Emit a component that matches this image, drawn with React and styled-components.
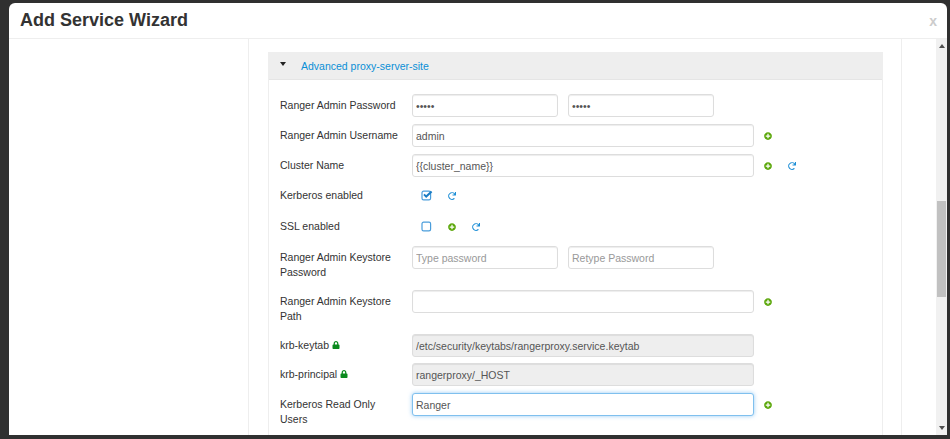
import React from 'react';
import styled, { createGlobalStyle } from 'styled-components';
import { FaPlusCircle, FaRedo, FaLock } from 'react-icons/fa';

const GlobalStyle = createGlobalStyle`
html, body {
  margin: 0;
  height: 100%;
  background: #333;
  overflow: hidden;
}
#root {
  height: 100%;
}
* {
  box-sizing: border-box;
}
`;

const Backdrop = styled.div`
width: 950px;
height: 439px;
padding: 3px 3px 4px 9px;
background: #303030;
`;

const Modal = styled.div`
height: 100%;
display: flex;
flex-direction: column;
overflow: hidden;
background: #fff;
border-radius: 6px 6px 0 0;
font-family: "Liberation Sans", Arial, sans-serif;
color: #333;
`;

const Header = styled.header`
flex: none;
height: 36px;
display: flex;
align-items: center;
justify-content: space-between;
padding: 0 10px 0 11px;
border-bottom: 1px solid #eee;
`;

const Title = styled.h3`
margin: 0;
font-size: 18px;
font-weight: bold;
`;

const Close = styled.span`
font-size: 14px;
font-weight: bold;
color: #ccc;
`;

const Body = styled.div`
flex: 1;
min-height: 0;
display: flex;
`;

const Sidebar = styled.aside`
flex: none;
width: 240px;
border-right: 1px solid #eee;
`;

const Content = styled.main`
flex: none;
width: 653px;
padding: 13px 18px 0 19px;
border-right: 1px solid #eee;
overflow: hidden;
`;

const Gutter = styled.div`
flex: 1;
`;

const Panel = styled.section`
border: 1px solid #eee;
border-bottom: 0;
height: 400px;
`;

const PanelHead = styled.div`
height: 27px;
display: flex;
align-items: center;
gap: 15px;
padding-left: 11px;
background: #eee;
border-bottom: 1px solid #e5e5e5;
`;

const Caret = styled.span`
width: 0;
height: 0;
margin-bottom: 4px;
border-left: 3.5px solid transparent;
border-right: 3.5px solid transparent;
border-top: 4px solid #222;
`;

const PanelLink = styled.a`
font-size: 10.5px;
color: #0a8fd6;
`;

const Form = styled.div`
display: flex;
flex-direction: column;
padding: 14px 0 0 11px;
`;

const Row = styled.div`
display: flex;
align-items: flex-start;
height: ${props => props.$height || 23}px;
margin-bottom: ${props => props.$gap ?? 7}px;
`;

const Label = styled.label`
flex: none;
width: 132px;
padding-top: ${props => props.$top ?? 4}px;
padding-right: 10px;
font-size: 10.5px;
line-height: 15px;
display: block;
`;

const Input = styled.input`
flex: none;
width: ${props => props.$width || 342}px;
height: 23px;
margin-right: ${props => props.$right || 0}px;
padding: 0 3px;
font-family: inherit;
font-size: 10.5px;
color: #555;
background: ${props => (props.readOnly ? '#eee' : '#fff')};
border: 1px solid ${props => (props.$focus ? '#7fc0ee' : '#ddd')};
border-radius: 3px;
box-shadow: ${props => (props.$focus
    ? '0 0 4px rgba(82,168,236,.6)'
    : 'inset 0 1px 1px rgba(0,0,0,.075)')};
outline: none;
&::placeholder {
  color: #999;
}
`;

const Actions = styled.div`
display: flex;
align-items: center;
gap: 16px;
height: 23px;
margin-left: ${props => props.$left ?? 10}px;
`;

const Add = styled(FaPlusCircle)`
width: 8px;
height: 8px;
color: #5ba70a;
`;

const Reset = styled(FaRedo)`
width: 8px;
height: 8px;
color: #1c8ed6;
`;

const Lock = styled(FaLock)`
width: 8px;
height: 8px;
margin-left: 3px;
color: #0a8a1e;
`;

const CheckSvg = styled.svg`
width: 12px;
height: 11px;
margin-left: 9px;
margin-right: -1px;
`;

const Scrollbar = styled.div`
flex: none;
width: 11px;
display: flex;
flex-direction: column;
align-items: center;
background: #f1f1f1;
`;

const ScrollArrow = styled.span`
flex: none;
width: 0;
height: 0;
margin: ${props => (props.$down ? 'auto 0 5px' : '5px 0 0')};
border-left: 3.5px solid transparent;
border-right: 3.5px solid transparent;
border-top: ${props => (props.$down ? '4px solid #505050' : '0')};
border-bottom: ${props => (props.$down ? '0' : '4px solid #505050')};
`;

const ScrollThumb = styled.div`
flex: none;
width: 9px;
height: 96px;
margin-top: 153px;
background: #c1c1c1;
`;

const Checkbox = ({ checked }) => (
  <CheckSvg viewBox="0 0 12 11">
    <rect x="1" y="1.2" width="8.6" height="8.6" rx="1.6" fill="none" stroke="#4a9ddb" strokeWidth="1.2" />
    {checked && <path d="M3 4.4 L5.2 6.6 L10.6 1.6" fill="none" stroke="#1a7cc4" strokeWidth="2" />}
  </CheckSvg>
);

const App = () => (
  <>
    <GlobalStyle />
    <Backdrop>
      <Modal>
        <Header>
          <Title>Add Service Wizard</Title>
          <Close>x</Close>
        </Header>
        <Body>
          <Sidebar />
          <Content>
            <Panel>
              <PanelHead>
                <Caret />
                <PanelLink>Advanced proxy-server-site</PanelLink>
              </PanelHead>
              <Form>
                <Row>
                  <Label>Ranger Admin Password</Label>
                  <Input type="password" defaultValue="admin" $width={146} $right={10} />
                  <Input type="password" defaultValue="admin" $width={146} />
                </Row>
                <Row>
                  <Label>Ranger Admin Username</Label>
                  <Input defaultValue="admin" />
                  <Actions><Add /></Actions>
                </Row>
                <Row>
                  <Label>Cluster Name</Label>
                  <Input defaultValue="{{cluster_name}}" />
                  <Actions><Add /><Reset /></Actions>
                </Row>
                <Row $gap={8}>
                  <Label>Kerberos enabled</Label>
                  <Actions $left={0}><Checkbox checked /><Reset /></Actions>
                </Row>
                <Row $gap={8}>
                  <Label>SSL enabled</Label>
                  <Actions $left={0}><Checkbox /><Add /><Reset /></Actions>
                </Row>
                <Row $height={37}>
                  <Label>Ranger Admin Keystore Password</Label>
                  <Input placeholder="Type password" $width={146} $right={10} />
                  <Input placeholder="Retype Password" $width={146} />
                </Row>
                <Row $height={37}>
                  <Label>Ranger Admin Keystore Path</Label>
                  <Input />
                  <Actions><Add /></Actions>
                </Row>
                <Row $gap={6}>
                  <Label>krb-keytab<Lock /></Label>
                  <Input readOnly defaultValue="/etc/security/keytabs/rangerproxy.service.keytab" />
                </Row>
                <Row>
                  <Label>krb-principal<Lock /></Label>
                  <Input readOnly defaultValue="rangerproxy/_HOST" />
                </Row>
                <Row $height={37}>
                  <Label>Kerberos Read Only Users</Label>
                  <Input defaultValue="Ranger" $focus />
                  <Actions><Add /></Actions>
                </Row>
              </Form>
            </Panel>
          </Content>
          <Gutter />
          <Scrollbar>
            <ScrollArrow />
            <ScrollThumb />
            <ScrollArrow $down />
          </Scrollbar>
        </Body>
      </Modal>
    </Backdrop>
  </>
);

export default App;
